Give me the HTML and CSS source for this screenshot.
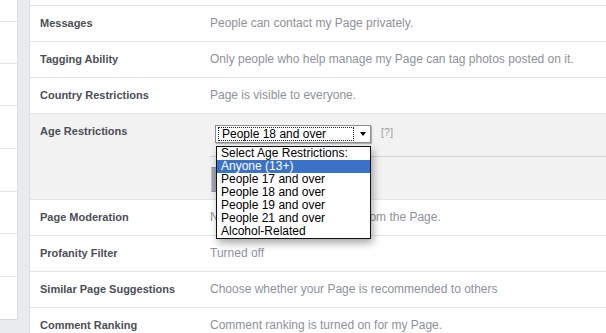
FILE: index.html
```html
<!DOCTYPE html>
<html>
<head>
<meta charset="utf-8">
<link rel="stylesheet" href="styles.css">
</head>
<body>
<div class="page">
  <aside class="side">
    <div class="cell"></div><div class="cell"></div><div class="cell"></div><div class="cell"></div>
    <div class="cell"></div><div class="cell"></div><div class="cell"></div><div class="cell"></div>
  </aside>
  <main class="main">
    <div class="stub"></div>
    <div class="row"><div class="label">Messages</div><div class="value">People can contact my Page privately.</div></div>
    <div class="row"><div class="label">Tagging Ability</div><div class="value">Only people who help manage my Page can tag photos posted on it.</div></div>
    <div class="row"><div class="label">Country Restrictions</div><div class="value">Page is visible to everyone.</div></div>
    <div class="row age">
      <div class="label">Age Restrictions</div>
      <div class="edit">
        <div class="select-line">
          <div class="select">
            <span class="sel-text">People 18 and over</span>
            <span class="sel-btn"><span class="tri"></span></span>
          </div>
          <span class="help">[?]</span>
        </div>
        <div class="actions"><span class="btn"></span></div>
        <ul class="menu">
          <li>Select Age Restrictions:</li>
          <li class="on">Anyone (13+)</li>
          <li>People 17 and over</li>
          <li>People 18 and over</li>
          <li>People 19 and over</li>
          <li>People 21 and over</li>
          <li>Alcohol-Related</li>
        </ul>
      </div>
    </div>
    <div class="row"><div class="label">Page Moderation</div><div class="value">No words are being blocked from the Page.</div></div>
    <div class="row"><div class="label">Profanity Filter</div><div class="value">Turned off</div></div>
    <div class="row"><div class="label">Similar Page Suggestions</div><div class="value">Choose whether your Page is recommended to others</div></div>
    <div class="row"><div class="label">Comment Ranking</div><div class="value">Comment ranking is turned on for my Page.</div></div>
  </main>
</div>
</body>
</html>
```

FILE: styles.css
```css
* { box-sizing: border-box; }
html, body {
  margin: 0;
  padding: 0;
  background: #e9ebee;
  overflow: hidden;
  font-family: "Liberation Sans", Arial, sans-serif;
}
.page {
  display: flex;
  width: 606px;
  height: 333px;
  overflow: hidden;
}
.side {
  width: 18px;
  height: 320px;
  background: #fff;
  border-right: 1px solid #dcdee2;
  display: grid;
  grid-template-rows: 22px 42px 42px 43px 43px 42px 43px 43px;
  flex-shrink: 0;
}
.cell {
  border-bottom: 1px solid #e3e4e7;
}
.cell:last-child { border-bottom: 1px solid #d4d6da; }
.main {
  margin-left: 11px;
  flex: 1;
  min-width: 0;
  background: #fff;
  border-left: 1px solid #dcdee2;
  white-space: nowrap;
}
.stub { height: 5px; }
.row {
  display: flex;
  height: 36px;
  border-top: 1px solid #e3e4e7;
  padding: 11px 0 0 10px;
  line-height: 13px;
}
.label {
  width: 170px;
  flex-shrink: 0;
  font-size: 11px;
  font-weight: bold;
  color: #4b4f56;
}
.value {
  font-size: 12px;
  color: #8e929a;
}
.row.age {
  height: 86px;
  background: #f2f2f2;
}
.edit {
  position: relative;
  flex: 1;
}
.select-line {
  display: flex;
  align-items: flex-start;
  height: 18px;
}
.select {
  margin-left: 5px;
  width: 156px;
  height: 18px;
  display: flex;
  background: #fff;
  border: 1px solid #8c8c8c;
  box-shadow: 1px 1px 1px rgba(0,0,0,.25);
  padding: 1px 0 1px 2px;
}
.sel-text {
  width: 136px;
  height: 14px;
  border: 1px dotted #222;
  font-size: 12px;
  line-height: 12px;
  padding-left: 3px;
  color: #000;
}
.sel-btn {
  flex: 1;
  display: flex;
  align-items: center;
  justify-content: center;
}
.tri {
  width: 0;
  height: 0;
  border-left: 3px solid transparent;
  border-right: 3px solid transparent;
  border-top: 4px solid #000;
  margin-left: 1px;
}
.help {
  margin-left: 10px;
  margin-top: 1px;
  font-size: 10px;
  color: #9a9a9a;
  letter-spacing: 0.5px;
}
.actions {
  margin-top: 13px;
  border-top: 1px solid #d6d7d9;
  padding-top: 10px;
  height: 35px;
}
.btn {
  display: block;
  width: 90px;
  height: 25px;
  margin-left: 1px;
  background: #a1a5ad;
  border: 1px solid #8e939b;
  border-left-color: #c3c6cb;
}
.menu {
  position: absolute;
  left: 6px;
  top: 21px;
  width: 155px;
  margin: 0;
  padding: 0;
  list-style: none;
  background: #fff;
  border: 1px solid #111;
  box-shadow: 2px 4px 8px rgba(0,0,0,.35);
  font-size: 12px;
  line-height: 13px;
  color: #000;
}
.menu li {
  padding-left: 4px;
  height: 13px;
}
.menu li.on {
  background: #3a72c8;
  color: #fff;
}
```
